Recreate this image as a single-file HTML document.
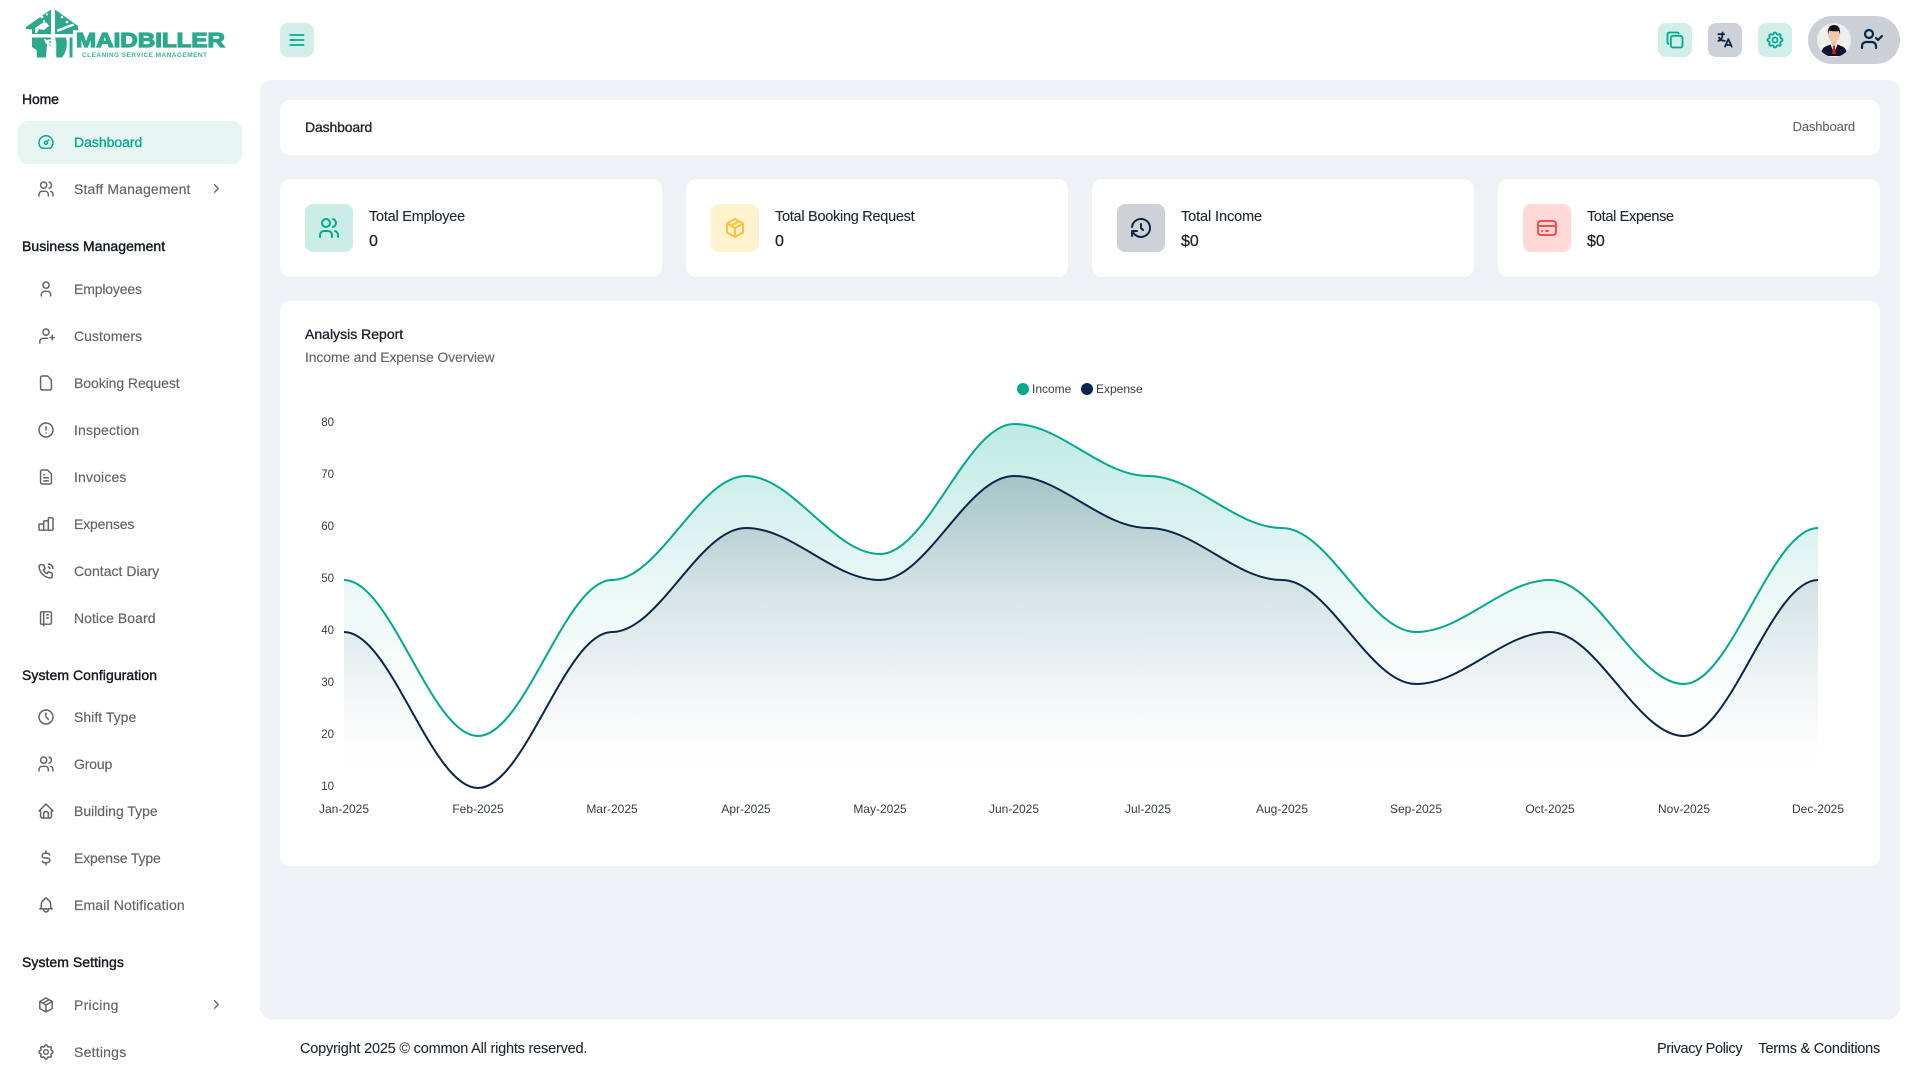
<!DOCTYPE html>
<html lang="en"><head><meta charset="utf-8"><title>Dashboard</title>
<style>
*{box-sizing:border-box}
html,body{margin:0;padding:0;width:1920px;height:1080px;overflow:hidden;background:#fff;font-family:"Liberation Sans",sans-serif}
.a{position:absolute}
.t{position:absolute;height:20px;line-height:20px;white-space:nowrap;font-size:14px;letter-spacing:-.15px}
.h{left:22px;color:#131920;-webkit-text-stroke:.4px #131920}
.n{left:74px;color:#5f6266;-webkit-text-stroke:.15px #5f6266}
svg.i{position:absolute;fill:none;stroke:currentColor;stroke-linecap:round;stroke-linejoin:round}
.s{left:36px;width:20px;height:20px;stroke-width:1.9;color:#5f6266;transform:scale(.93)}
.b{position:absolute;top:23px;width:34px;height:34px;border-radius:8px}
.c{position:absolute;top:179px;width:382px;height:98px;background:#fff;border-radius:10px}
.ib{position:absolute;top:204px;width:48px;height:48px;border-radius:8px}
.ct{font-size:14.5px;color:#1d2630;letter-spacing:-.1px;-webkit-text-stroke:.12px #1d2630}
.cv{font-size:16px;color:#1d2630;letter-spacing:0;-webkit-text-stroke:.3px #1d2630}
</style></head><body>

<!-- logo -->
<svg class="a" style="left:20px;top:4px" width="220" height="60" viewBox="20 4 220 60" fill="#2ba98c">
<path d="M51 9.500V34H32V29.500L26 29V27Z"/>
<path d="M55 9.500L78 26V30.500L73 30V34H55Z"/>
<path d="M32 37.500H51V46L47 44L46 57.500H37L36.500 50L32 47Z"/>
<path d="M55 37.500H66C68 45 66 53 62 57.500H56.500C55.500 50 57.500 45 55 37.500Z"/>
<path d="M69.500 37.500H72.500V57.500H69.500Z"/>
<g fill="#fff">
<circle cx="42" cy="17" r="1.400"/><circle cx="47" cy="14.500" r="1"/><circle cx="44" cy="21" r="1"/><path d="M35 28l9-6 3 1 2 3-5 4-5-1-2 4h-2z"/>
<circle cx="62" cy="17" r="1.300"/><circle cx="67" cy="22" r="1.400"/><path d="M57 29.500l16-6 1.500 2-17 6.500z"/>
<path d="M44 38.500l3 1.500 4-1v2l-3 1 3 1v2l-5-1z"/>
</g>
<text x="76" y="47" font-family="Liberation Sans" font-weight="700" font-size="20.500" textLength="149" lengthAdjust="spacingAndGlyphs" stroke="#2ba98c" stroke-width="1.200">MAIDBILLER</text>
<text x="82" y="57" font-family="Liberation Sans" font-weight="700" font-size="6.500" textLength="125" lengthAdjust="spacing" fill="#3bb39a">CLEANING SERVICE MANAGEMENT</text>
</svg>

<!-- header -->
<div class="b" style="left:280px;background:#d3ede8"></div>
<svg class="i" style="left:287px;top:30px;color:#00a98f;stroke-width:2" width="20" height="20" viewBox="0 0 24 24"><path d="M4 6l16 0M4 12l16 0M4 18l16 0"/></svg>
<div class="b" style="left:1658px;background:#d1eee8"></div>
<svg class="i" style="left:1665px;top:30px;color:#00a98f;stroke-width:2.200" width="20" height="20" viewBox="0 0 24 24"><path d="M7 9.667a2.667 2.667 0 0 1 2.667 -2.667h8.666a2.667 2.667 0 0 1 2.667 2.667v8.666a2.667 2.667 0 0 1 -2.667 2.667h-8.666a2.667 2.667 0 0 1 -2.667 -2.667z"/><path d="M4.012 16.737a2.005 2.005 0 0 1 -1.012 -1.737v-10c0 -1.100 .9 -2 2 -2h10c.75 0 1.158 .385 1.500 1"/></svg>
<div class="b" style="left:1708px;background:#cdd2d9"></div>
<svg class="i" style="left:1715px;top:30px;color:#0b2747;stroke-width:2.200" width="20" height="20" viewBox="0 0 24 24"><path d="M4 5h7M9 3v2c0 4.418 -2.239 8 -5 8M5 9c0 2.144 2.952 3.908 6.700 4M12 20l4 -9l4 9M19.100 18h-6.200"/></svg>
<div class="b" style="left:1758px;background:#d1eee8"></div>
<svg class="i" style="left:1765px;top:30px;color:#00a98f;stroke-width:2.200" width="20" height="20" viewBox="0 0 24 24"><path d="M10.325 4.317c.426 -1.756 2.924 -1.756 3.350 0a1.724 1.724 0 0 0 2.573 1.066c1.543 -.94 3.310 .826 2.370 2.370a1.724 1.724 0 0 0 1.065 2.572c1.756 .426 1.756 2.924 0 3.350a1.724 1.724 0 0 0 -1.066 2.573c.94 1.543 -.826 3.310 -2.370 2.370a1.724 1.724 0 0 0 -2.572 1.065c-.426 1.756 -2.924 1.756 -3.350 0a1.724 1.724 0 0 0 -2.573 -1.066c-1.543 .94 -3.310 -.826 -2.370 -2.370a1.724 1.724 0 0 0 -1.065 -2.572c-1.756 -.426 -1.756 -2.924 0 -3.350a1.724 1.724 0 0 0 1.066 -2.573c-.94 -1.543 .826 -3.310 2.370 -2.370c1 .608 2.296 .07 2.572 -1.065z"/><path d="M9 12a3 3 0 1 0 6 0a3 3 0 0 0 -6 0"/></svg>
<div class="a" style="left:1808px;top:16px;width:92px;height:48px;border-radius:24px;background:#cbd0d7"></div>
<svg class="a" style="left:1817px;top:23px" width="34" height="34" viewBox="0 0 34 34">
<defs><clipPath id="av"><circle cx="17" cy="17" r="17"/></clipPath></defs>
<g clip-path="url(#av)"><rect width="34" height="34" fill="#efefef"/>
<path d="M4 33c0-7 2.500-9 7-10.500l6-2.500 6 2.500c4.500 1.500 7 3.500 7 10.500z" fill="#12142b"/>
<path d="M13.500 21l3.500-.5 3.500.5-3.500 10z" fill="#fff"/><path d="M16 22.500h2l.8 8.500h-3.600z" fill="#c9232d"/>
<rect x="14.500" y="16" width="5" height="6" fill="#eebd9c"/>
<ellipse cx="17" cy="11.500" rx="5.800" ry="7.500" fill="#f3c8a8"/>
<path d="M11 11.500c-.8-6.500 1.800-9.500 6-9.500s6.800 3 6 9.500l-1-3.500c-3 .5-7 .5-10-.5z" fill="#111"/></g></svg>
<svg class="i" style="left:1860px;top:27px;color:#0b2747;stroke-width:2.200" width="24" height="24" viewBox="0 0 24 24"><path d="M16 21v-2a4 4 0 0 0-4-4H6a4 4 0 0 0-4 4v2"/><circle cx="9" cy="7" r="4"/><path d="M16 11l2 2l4-4"/></svg>

<!-- sidebar -->
<div class="a" style="left:18px;top:121px;width:224px;height:43px;border-radius:10px;background:#e6f5f2"></div>
<div class="t h" style="top:89px">Home</div>
<div class="t h" style="top:236px;letter-spacing:.04px">Business Management</div>
<div class="t h" style="top:665px;letter-spacing:.06px">System Configuration</div>
<div class="t h" style="top:952px;letter-spacing:.05px">System Settings</div>

<svg class="i s" style="top:132px;color:#00a98f" viewBox="0 0 24 24"><path d="M10 13a2 2 0 1 0 4 0a2 2 0 1 0 -4 0M13.450 11.550l2.050 -2.050M6.400 20a9 9 0 1 1 11.200 0z"/></svg>
<div class="t n" style="top:132px;color:#00a98f;-webkit-text-stroke:.3px #00a98f;letter-spacing:-.02px">Dashboard</div>
<svg class="i s" style="top:179px" viewBox="0 0 24 24"><path d="M5 7a4 4 0 1 0 8 0a4 4 0 1 0 -8 0M3 21v-2a4 4 0 0 1 4 -4h4a4 4 0 0 1 4 4v2M16 3.130a4 4 0 0 1 0 7.750M21 21v-2a4 4 0 0 0 -3 -3.850"/></svg>
<div class="t n" style="top:179px;letter-spacing:.15px">Staff Management</div>
<svg class="i" style="left:209px;top:181px;width:15px;height:15px;stroke-width:2;color:#5f6266" viewBox="0 0 24 24"><path d="M9 6l6 6l-6 6"/></svg>

<svg class="i s" style="top:279px" viewBox="0 0 24 24"><path d="M8 7a4 4 0 1 0 8 0a4 4 0 0 0 -8 0M6 21v-2a4 4 0 0 1 4 -4h4a4 4 0 0 1 4 4v2"/></svg>
<div class="t n" style="top:279px">Employees</div>
<svg class="i s" style="top:326px" viewBox="0 0 24 24"><path d="M8 7a4 4 0 1 0 8 0a4 4 0 0 0 -8 0M17 14h6M20 11v6M4 21v-2a4 4 0 0 1 4 -4h6"/></svg>
<div class="t n" style="top:326px;letter-spacing:.05px">Customers</div>
<svg class="i s" style="top:373px" viewBox="0 0 24 24"><path d="M17 21h-10a2 2 0 0 1 -2 -2v-14a2 2 0 0 1 2 -2h7l5 5v11a2 2 0 0 1 -2 2z"/></svg>
<div class="t n" style="top:373px;letter-spacing:-.07px">Booking Request</div>
<svg class="i s" style="top:420px" viewBox="0 0 24 24"><path d="M3 12a9 9 0 1 0 18 0a9 9 0 0 0 -18 0M12 8v4M12 16h.01"/></svg>
<div class="t n" style="top:420px;letter-spacing:.15px">Inspection</div>
<svg class="i s" style="top:467px" viewBox="0 0 24 24"><path d="M17 21h-10a2 2 0 0 1 -2 -2v-14a2 2 0 0 1 2 -2h7l5 5v11a2 2 0 0 1 -2 2zM9 9l1 0M9 13l6 0M9 17l6 0"/></svg>
<div class="t n" style="top:467px;letter-spacing:.15px">Invoices</div>
<svg class="i s" style="top:514px" viewBox="0 0 24 24"><path d="M3 13a1 1 0 0 1 1 -1h4a1 1 0 0 1 1 1v6a1 1 0 0 1 -1 1h-4a1 1 0 0 1 -1 -1zM15 5a1 1 0 0 1 1 -1h4a1 1 0 0 1 1 1v14a1 1 0 0 1 -1 1h-4a1 1 0 0 1 -1 -1zM9 9a1 1 0 0 1 1 -1h4a1 1 0 0 1 1 1v10a1 1 0 0 1 -1 1h-4a1 1 0 0 1 -1 -1zM4 20h14"/></svg>
<div class="t n" style="top:514px">Expenses</div>
<svg class="i s" style="top:561px" viewBox="0 0 24 24"><path d="M5 4h4l2 5l-2.500 1.500a11 11 0 0 0 5 5l1.500 -2.500l5 2v4a2 2 0 0 1 -2 2a16 16 0 0 1 -15 -15a2 2 0 0 1 2 -2M15 7a2 2 0 0 1 2 2M15 3a6 6 0 0 1 6 6"/></svg>
<div class="t n" style="top:561px;letter-spacing:.03px">Contact Diary</div>
<svg class="i s" style="top:608px" viewBox="0 0 24 24"><path d="M6 4h11a2 2 0 0 1 2 2v12a2 2 0 0 1 -2 2h-11a1 1 0 0 1 -1 -1v-14a1 1 0 0 1 1 -1m3 0v18M13 8l2 0M13 12l2 0"/></svg>
<div class="t n" style="top:608px;letter-spacing:.05px">Notice Board</div>

<svg class="i s" style="top:707px" viewBox="0 0 24 24"><path d="M3 12a9 9 0 1 0 18 0a9 9 0 0 0 -18 0M12 7v5l3 3"/></svg>
<div class="t n" style="top:707px;letter-spacing:.03px">Shift Type</div>
<svg class="i s" style="top:754px" viewBox="0 0 24 24"><path d="M5 7a4 4 0 1 0 8 0a4 4 0 1 0 -8 0M3 21v-2a4 4 0 0 1 4 -4h4a4 4 0 0 1 4 4v2M16 3.130a4 4 0 0 1 0 7.750M21 21v-2a4 4 0 0 0 -3 -3.850"/></svg>
<div class="t n" style="top:754px">Group</div>
<svg class="i s" style="top:801px" viewBox="0 0 24 24"><path d="M5 12l-2 0l9 -9l9 9l-2 0M5 12v7a2 2 0 0 0 2 2h10a2 2 0 0 0 2 -2v-7M9 21v-6a2 2 0 0 1 2 -2h2a2 2 0 0 1 2 2v6"/></svg>
<div class="t n" style="top:801px;letter-spacing:-.01px">Building Type</div>
<svg class="i s" style="top:848px" viewBox="0 0 24 24"><path d="M16.700 8a3 3 0 0 0 -2.700 -2h-4a3 3 0 0 0 0 6h4a3 3 0 0 1 0 6h-4a3 3 0 0 1 -2.700 -2M12 3v3m0 12v3"/></svg>
<div class="t n" style="top:848px">Expense Type</div>
<svg class="i s" style="top:895px" viewBox="0 0 24 24"><path d="M10 5a2 2 0 1 1 4 0a7 7 0 0 1 4 6v3a4 4 0 0 0 2 3h-16a4 4 0 0 0 2 -3v-3a7 7 0 0 1 4 -6M9 17v1a3 3 0 0 0 6 0v-1"/></svg>
<div class="t n" style="top:895px;letter-spacing:.15px">Email Notification</div>

<svg class="i s" style="top:995px" viewBox="0 0 24 24"><path d="M12 3l8 4.500l0 9l-8 4.500l-8 -4.500l0 -9l8 -4.500M12 12l8 -4.500M12 12l0 9M12 12l-8 -4.500M16 5.250l-8 4.500"/></svg>
<div class="t n" style="top:995px;letter-spacing:.28px">Pricing</div>
<svg class="i" style="left:209px;top:997px;width:15px;height:15px;stroke-width:2;color:#5f6266" viewBox="0 0 24 24"><path d="M9 6l6 6l-6 6"/></svg>
<svg class="i s" style="top:1042px" viewBox="0 0 24 24"><path d="M10.325 4.317c.426 -1.756 2.924 -1.756 3.350 0a1.724 1.724 0 0 0 2.573 1.066c1.543 -.94 3.310 .826 2.370 2.370a1.724 1.724 0 0 0 1.065 2.572c1.756 .426 1.756 2.924 0 3.350a1.724 1.724 0 0 0 -1.066 2.573c.94 1.543 -.826 3.310 -2.370 2.370a1.724 1.724 0 0 0 -2.572 1.065c-.426 1.756 -2.924 1.756 -3.350 0a1.724 1.724 0 0 0 -2.573 -1.066c-1.543 .94 -3.310 -.826 -2.370 -2.370a1.724 1.724 0 0 0 -1.065 -2.572c-1.756 -.426 -1.756 -2.924 0 -3.350a1.724 1.724 0 0 0 1.066 -2.573c-.94 -1.543 .826 -3.310 2.370 -2.370c1 .608 2.296 .07 2.572 -1.065z"/><path d="M9 12a3 3 0 1 0 6 0a3 3 0 0 0 -6 0"/></svg>
<div class="t n" style="top:1042px;letter-spacing:.23px">Settings</div>

<!-- main -->
<div class="a" style="left:260px;top:80px;width:1640px;height:939px;background:#eef2f6;border-radius:12px"></div>
<div class="a" style="left:280px;top:100px;width:1600px;height:55px;background:#fff;border-radius:10px"></div>
<div class="t" style="left:305px;top:117px;color:#1d2630;-webkit-text-stroke:.35px #1d2630">Dashboard</div>
<div class="t" style="right:65px;top:117px;font-size:13px;color:#5f6266;letter-spacing:-.13px;-webkit-text-stroke:.1px #5f6266">Dashboard</div>

<div class="c" style="left:280px"></div>
<div class="c" style="left:686px"></div>
<div class="c" style="left:1092px"></div>
<div class="c" style="left:1498px"></div>

<div class="ib" style="left:305px;background:#cbede6"></div>
<svg class="i" style="left:317px;top:216px;color:#00a98f;stroke-width:2" width="24" height="24" viewBox="0 0 24 24"><path d="M5 7a4 4 0 1 0 8 0a4 4 0 1 0 -8 0M3 21v-2a4 4 0 0 1 4 -4h4a4 4 0 0 1 4 4v2M16 3.130a4 4 0 0 1 0 7.750M21 21v-2a4 4 0 0 0 -3 -3.850"/></svg>
<div class="t ct" style="left:369px;top:207px;letter-spacing:-.23px">Total Employee</div>
<div class="t cv" style="left:369px;top:232px">0</div>

<div class="ib" style="left:711px;background:#fff3cf"></div>
<svg class="i" style="left:723px;top:216px;color:#fdc13d;stroke-width:2" width="24" height="24" viewBox="0 0 24 24"><path d="M12 3l8 4.500l0 9l-8 4.500l-8 -4.500l0 -9l8 -4.500M12 12l8 -4.500M12 12l0 9M12 12l-8 -4.500M16 5.250l-8 4.500"/></svg>
<div class="t ct" style="left:775px;top:207px;letter-spacing:-.27px">Total Booking Request</div>
<div class="t cv" style="left:775px;top:232px">0</div>

<div class="ib" style="left:1117px;background:#cdd2d9"></div>
<svg class="i" style="left:1129px;top:216px;color:#0b2747;stroke-width:2" width="24" height="24" viewBox="0 0 24 24"><path d="M12 8l0 4l2 2M3.050 11a9 9 0 1 1 .5 4m-.5 5v-5h5"/></svg>
<div class="t ct" style="left:1181px;top:207px">Total Income</div>
<div class="t cv" style="left:1181px;top:232px">$0</div>

<div class="ib" style="left:1523px;background:#ffd8d8"></div>
<svg class="i" style="left:1535px;top:216px;color:#ff4a4f;stroke-width:2" width="24" height="24" viewBox="0 0 24 24"><path d="M3 8a3 3 0 0 1 3 -3h12a3 3 0 0 1 3 3v8a3 3 0 0 1 -3 3h-12a3 3 0 0 1 -3 -3zM3 10l18 0M7 15l.01 0M11 15l2 0"/></svg>
<div class="t ct" style="left:1587px;top:207px;letter-spacing:-.33px">Total Expense</div>
<div class="t cv" style="left:1587px;top:232px">$0</div>

<!-- chart card -->
<div class="a" style="left:280px;top:301px;width:1600px;height:565px;background:#fff;border-radius:10px"></div>
<div class="t" style="left:305px;top:324px;color:#1d2630;-webkit-text-stroke:.35px #1d2630;letter-spacing:.01px">Analysis Report</div>
<div class="t" style="left:305px;top:347px;color:#5f6266;letter-spacing:-.16px;-webkit-text-stroke:.1px #5f6266">Income and Expense Overview</div>

<svg class="a" style="left:0;top:0" width="1920" height="1080" viewBox="0 0 1920 1080" font-family="Liberation Sans" font-size="12" fill="#373d3f">
<defs>
<linearGradient id="g1" gradientUnits="userSpaceOnUse" x1="0" y1="424" x2="0" y2="750"><stop offset="0" stop-color="#00a98f" stop-opacity=".25"/><stop offset=".356" stop-color="#00a98f" stop-opacity=".13"/><stop offset=".54" stop-color="#00a98f" stop-opacity=".07"/><stop offset=".816" stop-color="#00a98f" stop-opacity=".02"/><stop offset="1" stop-color="#00a98f" stop-opacity="0"/></linearGradient>
<linearGradient id="g2" gradientUnits="userSpaceOnUse" x1="0" y1="476" x2="0" y2="770"><stop offset="0" stop-color="#0b2747" stop-opacity=".21"/><stop offset=".388" stop-color="#0b2747" stop-opacity=".1"/><stop offset=".762" stop-color="#0b2747" stop-opacity=".03"/><stop offset="1" stop-color="#0b2747" stop-opacity="0"/></linearGradient>
</defs>
<path fill="url(#g1)" d="M344 580C391 580 431 736 478 736C525 736 565 580 612 580C659 580 699 476 746 476C793 476 833 554 880 554C927 554 967 424 1014 424C1061 424 1101 476 1148 476C1195 476 1235 528 1282 528C1329 528 1369 632 1416 632C1463 632 1503 580 1550 580C1597 580 1637 684 1684 684C1731 684 1771 528 1818 528L1818 788L344 788Z"/>
<path fill="url(#g2)" d="M344 632C391 632 431 788 478 788C525 788 565 632 612 632C659 632 699 528 746 528C793 528 833 580 880 580C927 580 967 476 1014 476C1061 476 1101 528 1148 528C1195 528 1235 580 1282 580C1329 580 1369 684 1416 684C1463 684 1503 632 1550 632C1597 632 1637 736 1684 736C1731 736 1771 580 1818 580L1818 788L344 788Z"/>
<path fill="none" stroke="#00a98f" stroke-width="2" d="M344 580C391 580 431 736 478 736C525 736 565 580 612 580C659 580 699 476 746 476C793 476 833 554 880 554C927 554 967 424 1014 424C1061 424 1101 476 1148 476C1195 476 1235 528 1282 528C1329 528 1369 632 1416 632C1463 632 1503 580 1550 580C1597 580 1637 684 1684 684C1731 684 1771 528 1818 528"/>
<path fill="none" stroke="#0b2747" stroke-width="2" d="M344 632C391 632 431 788 478 788C525 788 565 632 612 632C659 632 699 528 746 528C793 528 833 580 880 580C927 580 967 476 1014 476C1061 476 1101 528 1148 528C1195 528 1235 580 1282 580C1329 580 1369 684 1416 684C1463 684 1503 632 1550 632C1597 632 1637 736 1684 736C1731 736 1771 580 1818 580"/>
<circle cx="1023" cy="389" r="6" fill="#00a98f"/><text x="1032" y="393">Income</text>
<circle cx="1087" cy="389" r="6" fill="#0b2747"/><text x="1096" y="393">Expense</text>
<g text-anchor="end" font-size="11.500"><text x="334" y="426">80</text><text x="334" y="478">70</text><text x="334" y="530">60</text><text x="334" y="582">50</text><text x="334" y="634">40</text><text x="334" y="686">30</text><text x="334" y="738">20</text><text x="334" y="790">10</text></g>
<g text-anchor="middle"><text x="344" y="813">Jan-2025</text><text x="478" y="813">Feb-2025</text><text x="612" y="813">Mar-2025</text><text x="746" y="813">Apr-2025</text><text x="880" y="813">May-2025</text><text x="1014" y="813">Jun-2025</text><text x="1148" y="813">Jul-2025</text><text x="1282" y="813">Aug-2025</text><text x="1416" y="813">Sep-2025</text><text x="1550" y="813">Oct-2025</text><text x="1684" y="813">Nov-2025</text><text x="1818" y="813">Dec-2025</text></g>
</svg>

<!-- footer -->
<div class="t" style="left:300px;top:1039px;color:#1d2630;font-size:14.500px;letter-spacing:-.2px;-webkit-text-stroke:.1px #1d2630">Copyright 2025 © common All rights reserved.</div>
<div class="t" style="left:1657px;top:1039px;color:#1d2630;font-size:14.500px;letter-spacing:-.36px;-webkit-text-stroke:.1px #1d2630">Privacy Policy</div>
<div class="t" style="right:40px;top:1039px;color:#1d2630;font-size:14.500px;letter-spacing:-.23px;-webkit-text-stroke:.1px #1d2630">Terms &amp; Conditions</div>
</body></html>
